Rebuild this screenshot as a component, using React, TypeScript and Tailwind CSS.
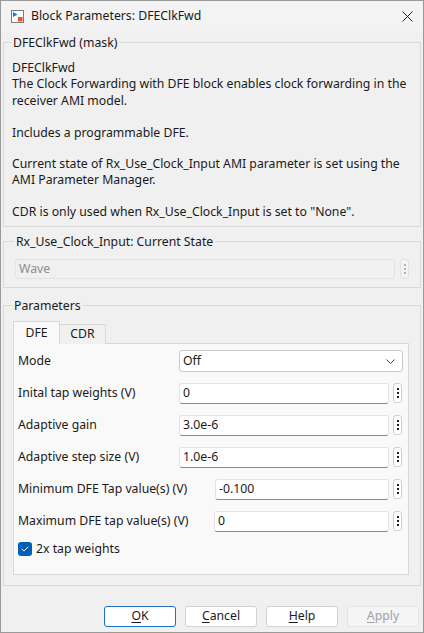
import { ReactNode } from "react";

const FONT = "font-['Noto_Sans',sans-serif]";

type Row = {
  label: string;
  value: string;
  labelWidth: string;
};

const ROWS: Row[] = [
  { label: "Inital tap weights (V)", value: "0", labelWidth: "w-[161px]" },
  { label: "Adaptive gain", value: "3.0e-6", labelWidth: "w-[161px]" },
  { label: "Adaptive step size (V)", value: "1.0e-6", labelWidth: "w-[161px]" },
  { label: "Minimum DFE Tap value(s) (V)", value: "-0.100", labelWidth: "w-[197px]" },
  { label: "Maximum DFE tap value(s) (V)", value: "0", labelWidth: "w-[196px]" },
];

function BlockIcon() {
  return (
    <svg width="13" height="13" viewBox="0 0 13 13">
      <rect x="0.5" y="0.5" width="12" height="12" fill="#fff" stroke="#7a7a7a" />
      <path d="M2 2 L6.5 4.5 L2 7 Z" fill="#1e78c8" />
      <rect x="7" y="7" width="4.5" height="4.5" fill="#e2561f" />
    </svg>
  );
}

function Kebab({ disabled = false }: { disabled?: boolean }) {
  return (
    <div
      className={`flex h-[20px] w-[9px] flex-col items-center justify-center gap-[2px] rounded-[3px] border ${
        disabled ? "border-[#e2e2e2] bg-[#f3f3f3]" : "border-[#cfcfcf] bg-white"
      }`}
    >
      {[0, 1, 2].map((i) => (
        <span
          key={i}
          className={`block h-[2px] w-[2px] ${disabled ? "bg-[#b4b4b4]" : "bg-[#1f1f1f]"}`}
        />
      ))}
    </div>
  );
}

function Group({
  title,
  className = "",
  children,
}: {
  title: string;
  className?: string;
  children: ReactNode;
}) {
  return (
    <fieldset className={`border border-[#d9d9d9] ${className}`}>
      <legend className="-ml-[1px] px-[2px] leading-[17px] text-[#1a1a1a]">{title}</legend>
      {children}
    </fieldset>
  );
}

function Button({
  mnemonic,
  rest,
  primary = false,
  disabled = false,
}: {
  mnemonic: string;
  rest: string;
  primary?: boolean;
  disabled?: boolean;
}) {
  return (
    <button
      type="button"
      className={`flex h-[21px] w-[72px] items-center justify-center rounded-[3px] border text-[12.25px] ${
        primary
          ? "border-[#1e6fc6] bg-white text-[#1a1a1a]"
          : disabled
          ? "border-[#e6e6e6] bg-[#f5f5f5] text-[#a3a3a3]"
          : "border-[#d2d2d2] bg-white text-[#1a1a1a]"
      }`}
    >
      <span>
        <span className="underline underline-offset-2">{mnemonic}</span>
        {rest}
      </span>
    </button>
  );
}

export default function App() {
  return (
    <div
      className={`${FONT} flex h-[633px] w-[424px] flex-col border border-[#9a9a9a] bg-[#f0f0f0] text-[12.25px] text-[#1a1a1a]`}
    >
      {/* title bar */}
      <div className="flex h-[30px] items-center bg-[#f3f3f3] pl-[10px] pr-[10px]">
        <BlockIcon />
        <span className="ml-[7px]">Block Parameters: DFEClkFwd</span>
        <div className="ml-auto flex h-[12px] w-[12px] items-center justify-center">
          <svg width="11" height="11" viewBox="0 0 11 11">
            <path d="M0.5 0.5 L10.5 10.5 M10.5 0.5 L0.5 10.5" stroke="#222" strokeWidth="1" />
          </svg>
        </div>
      </div>

      <div className="flex flex-1 flex-col px-[2px] pt-[3px]">
        <Group title="DFEClkFwd (mask)" className="pl-[8px] pr-[8px] pb-[6px]">
          <div className="pt-[9px] leading-[16.3px]">
            <div>DFEClkFwd</div>
            <div>The Clock Forwarding with DFE block enables clock forwarding in the</div>
            <div>receiver AMI model.</div>
            <div className="h-[16px]" />
            <div>Includes a programmable DFE.</div>
            <div className="h-[15px]" />
            <div>Current state of Rx_Use_Clock_Input AMI parameter is set using the</div>
            <div>AMI Parameter Manager.</div>
            <div className="h-[15px]" />
            <div>CDR is only used when Rx_Use_Clock_Input is set to "None".</div>
          </div>
        </Group>

        <Group title="Rx_Use_Clock_Input: Current State" className="mt-[6px] pl-[11px] pr-[11px] pb-[8px]">
          <div className="mt-[9px] flex items-center">
            <div className="flex h-[20px] flex-1 items-center rounded-[3px] border border-[#e3e3e3] bg-[#f0f0f0] pl-[3px] text-[#8d8d8d]">
              Wave
            </div>
            <div className="ml-[5px]">
              <Kebab disabled />
            </div>
          </div>
        </Group>

        <Group title="Parameters" className="mt-[9px] pl-[9px] pr-[11px] pb-[10px]">
          <div className="mt-[7px] flex items-end">
            <div className="flex h-[23px] w-[47px] items-center justify-center border border-b-0 border-[#d9d9d9] bg-[#f9f9f9]">
              DFE
            </div>
            <div className="flex h-[20px] w-[46px] items-center justify-center border border-b-0 border-l-0 border-[#d9d9d9] bg-[#f0f0f0]">
              CDR
            </div>
          </div>
          <div className="-mt-[1px] flex flex-col gap-[10px] border border-[#d9d9d9] bg-[#f9f9f9] pt-[6px] pb-[18px] pl-[4px] pr-[5px]">
            <div className="flex h-[22px] items-center">
              <span className="w-[161px]">Mode</span>
              <div className="flex h-[22px] flex-1 items-center justify-between rounded-[3px] border border-[#cbcbcb] bg-white pl-[3px] pr-[7px]">
                <span>Off</span>
                <svg width="9" height="5" viewBox="0 0 9 5">
                  <path d="M0.5 0.5 L4.5 4.5 L8.5 0.5" fill="none" stroke="#444" strokeWidth="1" />
                </svg>
              </div>
            </div>
            {ROWS.map((row) => (
              <div key={row.label} className="flex h-[22px] items-center">
                <span className={`${row.labelWidth} shrink-0`}>{row.label}</span>
                <div className="flex h-[21px] flex-1 items-center rounded-[3px] border border-[#e3e3e3] border-b-[#8a8a8a] bg-white pl-[3px]">
                  {row.value}
                </div>
                <div className="ml-[4px] mr-[1px]">
                  <Kebab />
                </div>
              </div>
            ))}
            <div className="flex h-[14px] items-center">
              <span className="flex h-[14px] w-[14px] items-center justify-center rounded-[3px] bg-[#005fb8]">
                <svg width="8" height="6" viewBox="0 0 8 6">
                  <path d="M0.8 3 L3 5 L7.2 0.8" fill="none" stroke="#fff" strokeWidth="1" />
                </svg>
              </span>
              <span className="ml-[4px]">2x tap weights</span>
            </div>
          </div>
        </Group>

        <div className="mt-auto mb-[5px] flex justify-end gap-[9px] pr-[2px]">
          <Button mnemonic="O" rest="K" primary />
          <Button mnemonic="C" rest="ancel" />
          <Button mnemonic="H" rest="elp" />
          <Button mnemonic="A" rest="pply" disabled />
        </div>
      </div>
    </div>
  );
}
